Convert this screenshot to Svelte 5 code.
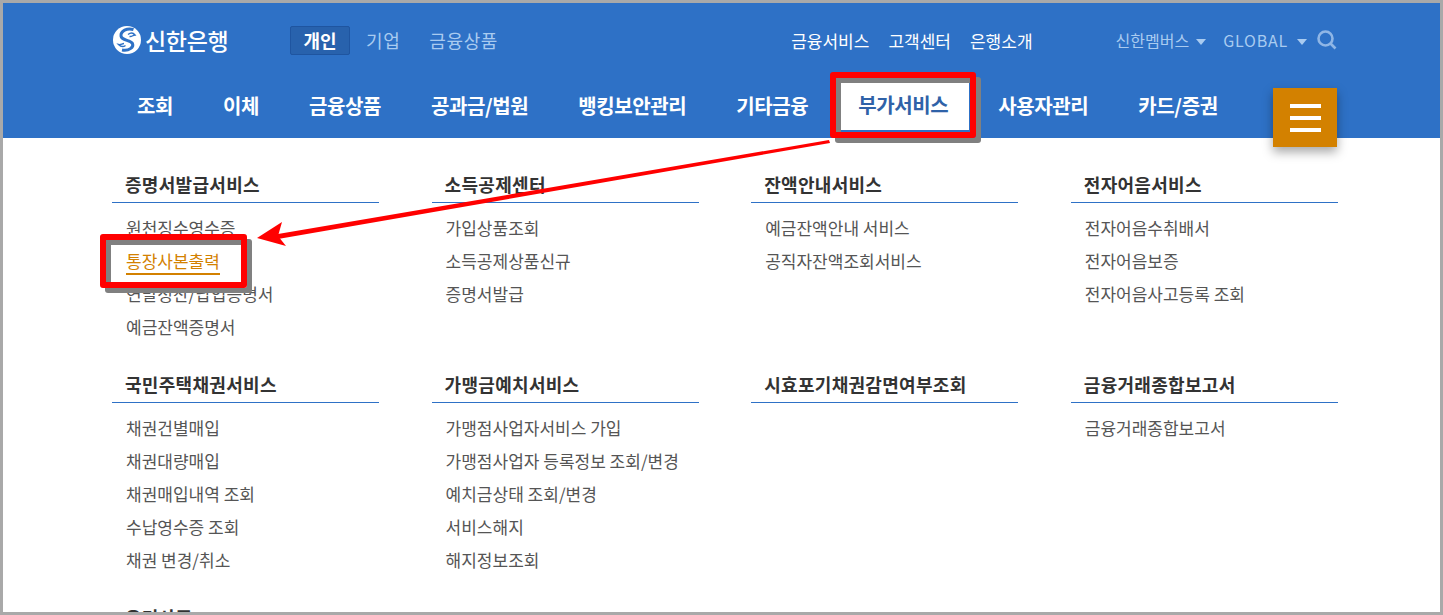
<script>
    const gnb = ["조회", "이체", "금융상품", "공과금/법원", "뱅킹보안관리", "기타금융", "부가서비스", "사용자관리", "카드/증권"]

    const groups = [
        { title: "증명서발급서비스", links: ["원천징수영수증", "통장사본출력", "연말정산/납입증명서", "예금잔액증명서"] },
        { title: "소득공제센터", links: ["가입상품조회", "소득공제상품신규", "증명서발급"] },
        { title: "잔액안내서비스", links: ["예금잔액안내 서비스", "공직자잔액조회서비스"] },
        { title: "전자어음서비스", links: ["전자어음수취배서", "전자어음보증", "전자어음사고등록 조회"] },
        { title: "국민주택채권서비스", links: ["채권건별매입", "채권대량매입", "채권매입내역 조회", "수납영수증 조회", "채권 변경/취소"] },
        { title: "가맹금예치서비스", links: ["가맹점사업자서비스 가입", "가맹점사업자 등록정보 조회/변경", "예치금상태 조회/변경", "서비스해지", "해지정보조회"] },
        { title: "시효포기채권감면여부조회", links: [] },
        { title: "금융거래종합보고서", links: ["금융거래종합보고서"] },
        { title: "우리사주", links: [] }
    ]
</script>

<div class="page">
    <header>
        <div class="top">
            <div class="logo">
                <svg width="28" height="28" viewBox="0 0 28 28">
                    <circle cx="14" cy="14" r="14" fill="#fff" />
                    <path d="M20.5 3.5C14 1.5 7.5 5 8 10C8.5 15 17.5 13.5 19.5 17.5C21 21 16 25.5 9 24" fill="none" stroke="#2e71c6" stroke-width="3" />
                    <path d="M15 8.5C17 7 20 6.5 22 9C20 9 19 11 16.5 10.5M12.5 19.5C10.5 21 8 21 5.5 18.5C8 19 9 17.5 11 17.5" fill="none" stroke="#2e71c6" stroke-width="1.4" />
                </svg>
                <span>신한은행</span>
            </div>
            <nav class="kind">
                <a class="on" href="#a">개인</a>
                <a href="#a">기업</a>
                <a href="#a">금융상품</a>
            </nav>
            <nav class="util">
                <a href="#a">금융서비스</a>
                <a href="#a">고객센터</a>
                <a href="#a">은행소개</a>
            </nav>
            <div class="extra">
                <span class="drop">신한멤버스</span>
                <span class="drop global">GLOBAL</span>
                <svg width="20" height="20" viewBox="0 0 20 20" fill="none" stroke="#8fb6e6" stroke-width="2.6">
                    <circle cx="8.5" cy="8.5" r="7" />
                    <path d="M13.5 13.5L18.5 18.5" />
                </svg>
            </div>
        </div>
        <div class="gnb">
            {#each gnb as item}
                <a class:on={item === "부가서비스"} href="#a">{item}</a>
            {/each}
            <button aria-label="menu"><i></i><i></i><i></i></button>
        </div>
    </header>

    <main>
        {#each groups as g}
            <section>
                <h3>{g.title}</h3>
                {#if g.links.length}
                    <ul>
                        {#each g.links as l}
                            <li><a class:on={l === "통장사본출력"} href="#a">{l}</a></li>
                        {/each}
                    </ul>
                {/if}
            </section>
        {/each}
    </main>

    <!-- screenshot annotations -->
    <div class="mark mark-nav"></div>
    <div class="mark mark-link"></div>
    <svg class="arrow" width="600" height="120" viewBox="256 130 600 120">
        <path d="M278 234L829 140L830 143L278 239Z" fill="#f00" />
        <path d="M257 238L282 222L278 236L286 246Z" fill="#f00" />
    </svg>
    <div class="frame"></div>
</div>

<style>
    :global(body) {
        margin: 0;
        background: #fff;
    }

    .page {
        position: relative;
        width: 1443px;
        height: 615px;
        overflow: hidden;
        font-family: "Noto Sans CJK KR", "Noto Sans", sans-serif;
        box-sizing: border-box;
        padding: 3px 3px 0;
    }

    a {
        text-decoration: none;
        color: inherit;
    }

    header {
        height: 135px;
        background: #2e71c6;
        padding: 0 103px 0 110px;
        box-sizing: border-box;
    }

    .top {
        display: flex;
        align-items: center;
        height: 74px;
    }

    .logo {
        display: flex;
        align-items: center;
        gap: 4px;
        width: 177px;
        color: #fff;
        font-size: 23px;
        font-weight: 500;
        letter-spacing: -0.3px;
    }

    .kind {
        display: flex;
        align-items: center;
        font-size: 18px;
        color: #a9cbf0;
        letter-spacing: 0.6px;
    }

    .kind a {
        margin-right: 29px;
    }

    .kind a.on {
        box-sizing: border-box;
        width: 60px;
        height: 29px;
        line-height: 26px;
        text-align: center;
        background: #2862ad;
        border: 1px solid #1f55a0;
        border-radius: 2px;
        color: #fff;
        font-weight: 700;
        letter-spacing: 0;
        margin-right: 16px;
    }

    .util {
        display: flex;
        gap: 19px;
        margin-left: auto;
        font-size: 17px;
        color: #fff;
    }

    .extra {
        display: flex;
        align-items: center;
        margin-left: 83px;
        font-size: 16px;
        color: #a9cbf0;
    }

    .drop::after {
        content: "";
        display: inline-block;
        margin-left: 7px;
        vertical-align: 2px;
        border: 5px solid transparent;
        border-top: 6px solid #a9cbf0;
        border-bottom: 0;
    }

    .global {
        margin: 0 10px 0 17px;
        letter-spacing: 0.8px;
    }

    .global::after {
        margin-left: 9px;
    }

    .gnb {
        position: relative;
        display: flex;
        align-items: center;
        height: 56px;
        padding-left: 24px;
        gap: 50px;
        font-size: 20px;
        font-weight: 700;
        color: #fff;
        letter-spacing: -0.4px;
    }

    .gnb a.on {
        background: #fff;
        color: #2f62a8;
        margin: 0 -21px;
        padding: 0 21px;
        height: 50px;
        line-height: 50px;
    }

    .gnb button {
        position: absolute;
        right: 0;
        top: 11px;
        width: 64px;
        height: 59px;
        padding: 0;
        border: 0;
        background: #d38100;
        box-shadow: 0 5px 10px rgba(0, 0, 0, 0.35);
        display: flex;
        flex-direction: column;
        align-items: center;
        justify-content: center;
        gap: 8px;
    }

    .gnb button i {
        width: 31px;
        height: 4px;
        background: #fff;
    }

    main {
        display: grid;
        grid-template-columns: repeat(4, 267px);
        column-gap: 52.6px;
        row-gap: 25px;
        padding: 31px 0 0 109px;
        color: #555;
    }

    h3 {
        margin: 0;
        height: 34px;
        line-height: 30px;
        padding-left: 13px;
        box-sizing: border-box;
        font-size: 18px;
        font-weight: 700;
        color: #333;
        border-bottom: 1px solid #2e71c6;
        letter-spacing: 0.3px;
    }

    ul {
        list-style: none;
        margin: 9px 0 0;
        padding: 0 0 0 14px;
        font-size: 17px;
    }

    li {
        height: 33px;
        line-height: 32px;
    }

    li a.on {
        color: #d38100;
        border-bottom: 2px solid #d38100;
    }

    .mark {
        position: absolute;
        box-sizing: border-box;
        border: 6px solid #f00;
        border-radius: 3px;
        box-shadow: 5px 5px 0 #808080, inset 5px 5px 0 #808080;
    }

    .mark-nav {
        left: 830px;
        top: 72px;
        width: 146px;
        height: 66px;
    }

    .mark-link {
        left: 100px;
        top: 234px;
        width: 147px;
        height: 54px;
    }

    .arrow {
        position: absolute;
        left: 256px;
        top: 130px;
    }

    .frame {
        position: absolute;
        inset: 0;
        border: 3px solid #a9a9a9;
        pointer-events: none;
    }
</style>
